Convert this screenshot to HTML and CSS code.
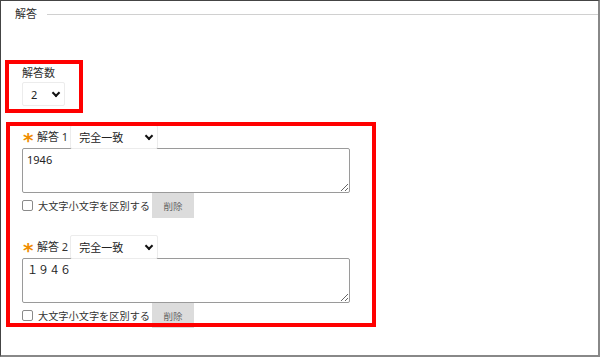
FILE: index.html
```html
<!DOCTYPE html>
<html lang="ja">
  <head>
    <meta charset="UTF-8" />
    <meta name="viewport" content="width=device-width, initial-scale=1.0" />
    <title>解答</title>
    <link rel="stylesheet" href="styles.css">
  </head>
  <body>
    <div class="frame">
      <div class="section-head">
        <span class="section-title">解答</span>
        <span class="section-line"></span>
      </div>

      <div class="count-block">
        <div class="field-label">解答数</div>
        <span class="select-wrap select-small">
          <select>
            <option>2</option>
          </select>
        </span>
      </div>

      <div class="answers">
        <div class="answer">
          <div class="answer-head">
            <span class="required">*</span>
            <span class="answer-label">解答 1</span>
            <span class="select-wrap select-match">
              <select>
                <option>完全一致</option>
              </select>
            </span>
          </div>
          <textarea class="answer-text">1946</textarea>
          <div class="answer-foot">
            <label class="case-check"><input type="checkbox" />大文字小文字を区別する</label>
            <button class="delete-btn">削除</button>
          </div>
        </div>

        <div class="answer">
          <div class="answer-head">
            <span class="required">*</span>
            <span class="answer-label">解答 2</span>
            <span class="select-wrap select-match">
              <select>
                <option>完全一致</option>
              </select>
            </span>
          </div>
          <textarea class="answer-text">１９４６</textarea>
          <div class="answer-foot">
            <label class="case-check"><input type="checkbox" />大文字小文字を区別する</label>
            <button class="delete-btn">削除</button>
          </div>
        </div>
      </div>

      <!-- 注釈の赤枠 -->
      <div class="mark mark-count"></div>
      <div class="mark mark-answers"></div>
    </div>
  </body>
</html>
```

FILE: styles.css
```css
* {
  box-sizing: border-box;
  margin: 0;
  padding: 0;
}

body {
  font-family: "Noto Sans", "Noto Sans CJK JP", sans-serif;
  font-size: 11px;
  color: #333;
  background: #fff;
}

.frame {
  position: relative;
  width: 600px;
  height: 357px;
  border-top: 1px solid #444;
  border-left: 1px solid #444;
  border-right: 2px solid #888;
  border-bottom: 2px solid #888;
  overflow: hidden;
}

.section-head {
  display: flex;
  align-items: center;
  gap: 10px;
  height: 26px;
  padding-left: 14px;
}

.section-title {
  font-size: 11px;
  line-height: 14px;
  color: #333;
}

.section-line {
  flex: 1;
  height: 1px;
  background: #d0d0d0;
}

.count-block {
  margin-top: 39px;
  padding-left: 21px;
}

.field-label {
  line-height: 14px;
  margin-bottom: 2px;
}

/* セレクト */
.select-wrap {
  position: relative;
  display: inline-block;
  flex-shrink: 0;
}

.select-wrap select {
  appearance: none;
  -webkit-appearance: none;
  display: block;
  height: 24px;
  border: 1px solid #ececec;
  border-radius: 2px;
  background: #fff;
  font-family: "Noto Sans", "Noto Sans CJK JP", sans-serif;
  font-size: 11px;
  color: #222;
  padding-left: 8px;
  outline: none;
}

.select-wrap::after {
  content: "";
  position: absolute;
  top: 8px;
  width: 4px;
  height: 4px;
  border-right: 2px solid #111;
  border-bottom: 2px solid #111;
  transform: rotate(45deg);
  pointer-events: none;
}

.select-small select {
  width: 43px;
}

.select-small::after {
  left: 31px;
}

.select-match select {
  width: 88px;
}

.select-match::after {
  left: 76px;
}

.answers {
  margin-top: 19px;
  padding-left: 21px;
  display: flex;
  flex-direction: column;
  gap: 17px;
}

.answer-head {
  display: flex;
  align-items: center;
  height: 24px;
}

.required {
  width: 15px;
  flex-shrink: 0;
  font-family: "DejaVu Sans", sans-serif;
  font-size: 20px;
  font-weight: bold;
  line-height: 16px;
  color: #f08c00;
  padding-top: 6px;
  padding-left: 1px;
}

.answer-label {
  white-space: nowrap;
  flex-shrink: 0;
  margin-right: 2px;
  line-height: 14px;
}

.answer-text {
  display: block;
  width: 328px;
  height: 45px;
  margin-top: -1px;
  border: 1px solid #9a9a9a;
  border-radius: 2px;
  padding: 4px 4px;
  font-family: "Noto Sans", "Noto Sans CJK JP", sans-serif;
  font-size: 11px;
  line-height: 14px;
  color: #222;
  resize: vertical;
  outline: none;
}

.answer-foot {
  display: flex;
  align-items: center;
  height: 25px;
}

.case-check {
  display: flex;
  align-items: center;
  gap: 5px;
  font-size: 10.2px;
  color: #333;
  white-space: nowrap;
}

.case-check input {
  appearance: none;
  -webkit-appearance: none;
  width: 11px;
  height: 11px;
  border: 1px solid #8a8a8a;
  border-radius: 2px;
  background: #fff;
}

.delete-btn {
  margin-left: 2px;
  width: 42px;
  height: 25px;
  border: none;
  background: #dcdcdc;
  color: #666;
  font-family: "Noto Sans CJK JP", sans-serif;
  font-size: 9.5px;
}

/* 赤枠 */
.mark {
  position: absolute;
  border: 4px solid #ff0000;
  pointer-events: none;
}

.mark-count {
  left: 4px;
  top: 59px;
  width: 78px;
  height: 53px;
}

.mark-answers {
  left: 5px;
  top: 121px;
  width: 370px;
  height: 205px;
}
```
